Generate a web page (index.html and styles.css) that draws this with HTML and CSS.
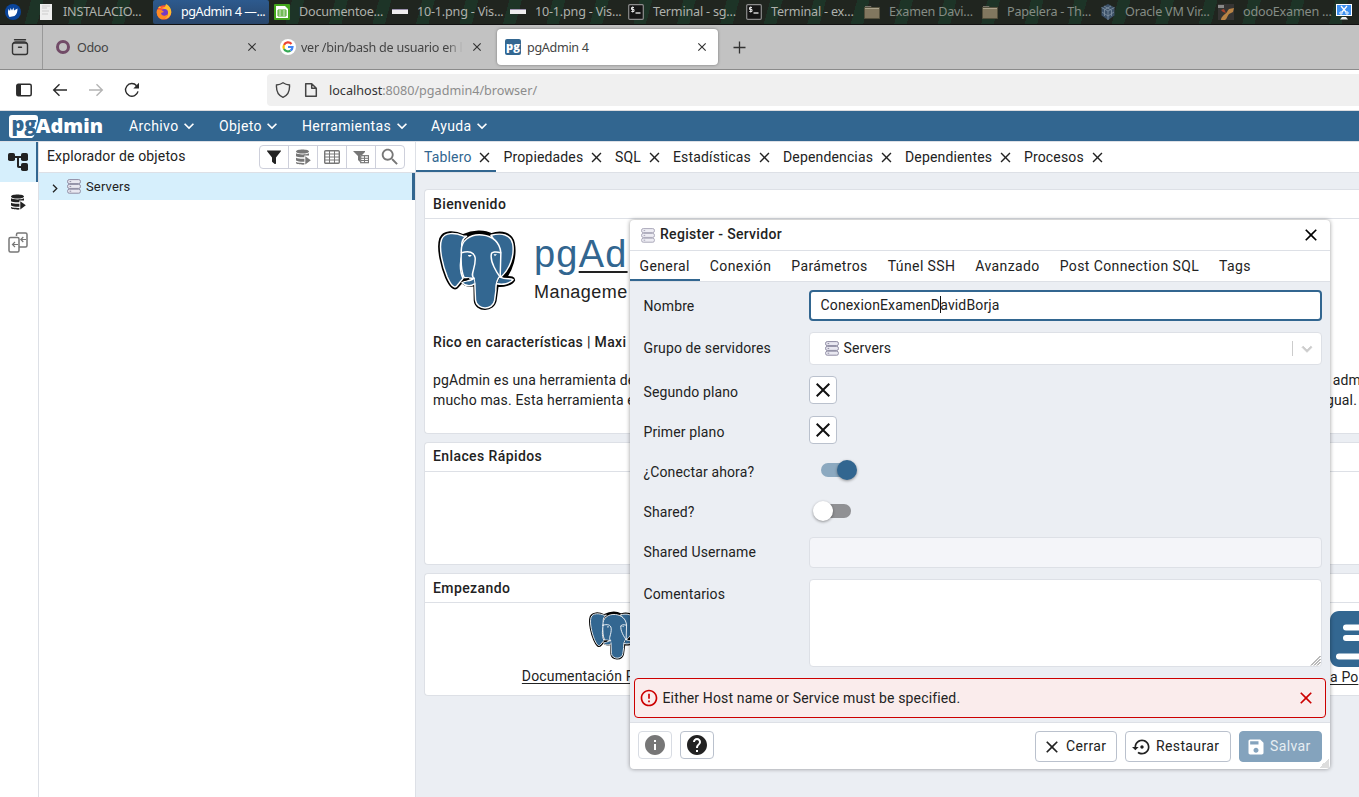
FILE: index.html
```
<!DOCTYPE html>
<html lang="es">
<head>
<meta charset="utf-8">
<title>pgAdmin 4</title>
<link rel="stylesheet" href="styles.css">
</head>
<body>
<svg class="sprite" aria-hidden="true">
  <symbol id="close" viewBox="0 0 24 24"><path d="M19 6.41 17.59 5 12 10.59 6.41 5 5 6.41 10.59 12 5 17.59 6.41 19 12 13.41 17.59 19 19 17.59 13.41 12z"/></symbol>
  <symbol id="chevron" viewBox="0 0 24 24"><path d="M16.59 8.59 12 13.17 7.41 8.59 6 10l6 6 6-6z"/></symbol>
  <symbol id="server" viewBox="0 0 14 15"><g fill="#e9e8f1" stroke="#8f8ca3" stroke-width="1"><rect x=".6" y=".6" width="12.8" height="4" rx="1.6"/><rect x=".6" y="5.4" width="12.8" height="4" rx="1.6"/><rect x=".6" y="10.2" width="12.8" height="4" rx="1.6"/><path d="M2.6 2.6h1.6M2.6 7.4h1.6M2.6 12.2h1.6"/></g></symbol>
  <symbol id="query" viewBox="0 0 16 16"><path d="M1 2.500C1 1.200 4 .4 7.500 .4S14 1.200 14 2.500 11 4.600 7.500 4.600 1 3.800 1 2.500zM1 4.300c2.500 1.500 10 1.600 13 0v2.200l-4.600-.1v1.800C6 8.600 2.500 8 1 7.200zM1 8.700c2 .9 5 1.200 8.400 1v3.100C6 13 2.500 12.400 1 11.500zM1 13c2 .8 5 1 8.400 .9v1.700C5.500 15.800 1 15 1 14zM10.300 7.200l5.500 4-5.500 4.200z"/></symbol>
  <symbol id="folder" viewBox="0 0 16 14"><path d="M1 1h6l1 2H1z" fill="#77736a"/><path d="M.5 2.500h15v11H.5z" fill="#81775f" stroke="#54503d"/><path d="M1 3.500h14" stroke="#aaa28b"/></symbol>
  <symbol id="term" viewBox="0 0 16 16"><rect x=".7" y=".7" width="14.600" height="14.600" rx="1" fill="#151515" stroke="#8c8c8c" stroke-width="1.200"/><path d="M6 3.500H3.500v2H6v2H3.300M4.700 2.500v6" stroke="#e4e4e4" fill="none"/><path d="M7.500 9h5" stroke="#fff" stroke-width="1.200"/></symbol>
  <symbol id="elephant" viewBox="22 22 240 249">
    <g stroke-linejoin="round" stroke-linecap="round">
      <path fill="#000" stroke="#000" stroke-width="9" d="M101 42C76 30 42 28 33 52C23 82 39 140 51 169C63 196 75 208 84 197L99 180C103 191 120 196 137 191L138 239C141 272 194 272 199 238L205 193C226 195 251 188 255 177C254 168 244 170 230 169C247 145 262 106 254 65C249 36 217 28 187 39C166 27 132 28 101 42z"/>
      <path fill="#336791" stroke="#fff" stroke-width="4.500" d="M101 43C77 33 45 31 36 53C26 81 41 138 53 167C64 192 74 204 82 195L101 172C90 150 90 110 104 91C91 72 98 51 112 44z"/>
      <path fill="#336791" stroke="#fff" stroke-width="4.500" d="M186 41C218 33 246 38 252 67C258 103 243 145 216 168L191 120L205 70z"/>
      <path fill="#336791" stroke="#fff" stroke-width="4.500" d="M96 94C92 57 124 36 160 40C192 43 213 63 216 94L214 164C204 176 200 188 201 208L197 239C192 270 143 269 139 238L137 189L134 172L104 169C96 150 94 125 96 94z"/>
      <path fill="#336791" stroke="#fff" stroke-width="4.500" d="M134 172C125 181 105 178 98 185C113 199 127 195 136 189M214 168C231 177 244 170 253 176C243 188 222 192 204 188"/>
      <path fill="none" stroke="#fff" stroke-width="4.500" d="M96 94C119 88 135 91 138 110C140 142 121 162 134 171M187 99C187 91 202 90 215 94M187 99C183 122 204 155 214 168"/>
      <path fill="#000" d="M105 174l16-4-5 7-15 4z"/>
      <path fill="#fff" d="M116 101h12l-5 5c-4 1-6-1-7-5zM194 99h10l-6 6z"/>
    </g>
  </symbol>
</svg>

<header class="taskbar">
  <div class="task launcher"><svg width="16" height="16" viewBox="0 0 16 16"><circle cx="8" cy="8" r="8" fill="#0a459b"/><path d="M3.500 5l1.500 2 .5-3 1.500 2.500L8.500 3.500l.5 3 3.500-2c0 3-.5 6-3 7.500l-5 1c-1.500-2-2-5-1-8z" fill="#fff"/></svg></div>
  <div class="task"><svg width="16" height="18" viewBox="0 0 16 18"><path d="M2 1h12v16H2z" fill="#eee"/><path d="M4 3h8M4 5h5M4 8h7M4 11h6" stroke="#ccc"/></svg><span>INSTALACIO...</span></div>
  <div class="task current"><svg width="16" height="16" viewBox="0 0 16 16"><circle cx="8" cy="8.500" r="7.300" fill="#fb5139"/><path d="M2 4l2-2 1 2 4-1 1-3c4 2 6 6 5 10-1 3-4 5-7 5 4-2 5-6 3-8-2-3-6-3-9-3z" fill="#ffbd2d"/><circle cx="8.500" cy="8.500" r="3.500" fill="#763ac5"/><path d="M1 6c3-1 5 0 7 2l-3 1c0 3 4 4 7 1-1 4-4 5.800-7 5C2 14 0 10 1 6z" fill="#ff8b24"/></svg><span>pgAdmin 4 —...</span></div>
  <div class="task"><svg width="16" height="16" viewBox="0 0 16 16"><rect width="16" height="16" rx="1" fill="#43a51c"/><path d="M2 2h9l3 3v9H2z" fill="#fff"/><path d="M4 6h8v6H4zM4 8h8M4 10h8M8 6v6" fill="none" stroke="#43a51c"/></svg><span>Documentoe...</span></div>
  <div class="task"><svg width="16" height="16"><path d="M0 5h16v5H0z" fill="#eee"/><path d="M0 5.500h16" stroke="#9b91ad"/></svg><span>10-1.png - Vis...</span></div>
  <div class="task"><svg width="16" height="16"><path d="M0 5h16v5H0z" fill="#eee"/><path d="M0 5.500h16" stroke="#9b91ad"/></svg><span>10-1.png - Vis...</span></div>
  <div class="task"><svg width="16" height="16"><use href="#term"/></svg><span>Terminal - sg...</span></div>
  <div class="task"><svg width="16" height="16"><use href="#term"/></svg><span>Terminal - ex...</span></div>
  <div class="task dim"><svg width="16" height="14"><use href="#folder"/></svg><span>Examen Davi...</span></div>
  <div class="task dim"><svg width="16" height="14"><use href="#folder"/></svg><span>Papelera - Th...</span></div>
  <div class="task dim"><svg width="16" height="16" viewBox="0 0 16 16"><path d="M8 0l6.500 3.500v8L8 16l-6.500-4.500v-8z" fill="#3d5269"/><path d="M1.500 3.500L8 7l6.500-3.500M8 7v9M4 2l7 4M11 2L4 6M4.500 6v6M11.500 6v6M2 8l6 4 6-4" stroke="#8193a3" fill="none" stroke-width=".8"/></svg><span>Oracle VM Vir...</span></div>
  <div class="task dim"><svg width="16" height="16" viewBox="0 0 16 16"><rect width="16" height="16" fill="#353433"/><path d="M3 16c0-3 2-4 4-6 2-1 2-3 4-5l5-1-1 4-4 2c-2 2-2 5-4 6z" fill="#b98345"/><path d="M3 6l3-1 2 4-3-1z" fill="#a9412a"/><path d="M0 1h6v3H0z" fill="#888"/></svg><span>odooExamen ...</span></div>
  <div class="task last"><svg width="16" height="16" viewBox="0 0 16 16"><rect x=".5" y=".5" width="15" height="11" fill="#3d91f0" stroke="#fff"/><path d="M5 2l5 6M11 2L6 8" stroke="#fff" stroke-width="1.300"/><circle cx="5" cy="9" r="1.200" fill="none" stroke="#fff"/><circle cx="11" cy="9" r="1.200" fill="none" stroke="#fff"/><path d="M6 13h4l2 2.500H4z" fill="#eee"/></svg></div>
</header>

<nav class="browser-tabs">
  <div class="recent"><svg width="18" height="18" viewBox="0 0 18 18" fill="none" stroke="#333" stroke-width="1.400" stroke-linecap="round"><path d="M3.500 1.700h11"/><rect x="1.500" y="5" width="15" height="11.500" rx="2"/><path d="M2.500 5c.3-1 1-1 2-1h9c1 0 1.700 0 2 1M7.500 9.200h3"/></svg></div>
  <div class="btab odoo"><svg width="16" height="16"><circle cx="8" cy="8" r="5.500" fill="none" stroke="#714b67" stroke-width="3"/></svg><span>Odoo</span><svg class="x"><use href="#close"/></svg></div>
  <div class="btab google"><svg width="16" height="16" viewBox="0 0 16 16"><circle cx="8" cy="8" r="8" fill="#fff"/><g fill="none" stroke-width="2.200"><path d="M11.500 5A4.500 4.500 0 0 0 4 6" stroke="#ea4335"/><path d="M4 6a4.500 4.500 0 0 0 0 4" stroke="#fbbc05"/><path d="M4 10a4.500 4.500 0 0 0 6.500 1.700" stroke="#34a853"/><path d="M10.500 11.700a4.500 4.500 0 0 0 2-3.700H8" stroke="#4285f4"/></g></svg><span class="fade">ver /bin/bash de usuario en lin</span><svg class="x"><use href="#close"/></svg></div>
  <div class="btab selected"><svg width="16" height="16" viewBox="0 0 16 16"><rect width="16" height="16" rx="2" fill="#336791"/><text class="favicon-text" x="1" y="11" textLength="14" lengthAdjust="spacingAndGlyphs">pg</text></svg><span>pgAdmin 4</span><svg class="x"><use href="#close"/></svg></div>
  <svg class="plus" width="13" height="13" viewBox="0 0 13 13"><path d="M6.500 .5v12M.5 6.500h12" stroke="#333" stroke-width="1.300"/></svg>
</nav>

<div class="address-bar">
  <svg width="16" height="16" viewBox="0 0 16 16"><rect x=".8" y="2.300" width="14.400" height="11.400" rx="1.500" fill="none" stroke="#2b2b2b" stroke-width="1.500"/><path d="M1 3h4v10H1z" fill="#2b2b2b"/></svg>
  <svg width="16" height="16" viewBox="0 0 16 16" fill="none" stroke="#2b2b2b" stroke-width="1.400"><path d="M15 8H2M7.500 2.200L1.700 8l5.800 5.800"/></svg>
  <svg width="16" height="16" viewBox="0 0 16 16" fill="none" stroke="#b4b4b4" stroke-width="1.400"><path d="M1 8h13M8.500 2.200L14.300 8l-5.800 5.800"/></svg>
  <svg width="16" height="16" viewBox="0 0 16 16"><path d="M14 9.300A6.300 6.300 0 1 1 12.600 3.700" fill="none" stroke="#2b2b2b" stroke-width="1.400"/><path d="M15 .8v5.700H9.300z" fill="#2b2b2b"/></svg>
  <div class="url">
    <svg width="16" height="16" viewBox="0 0 16 16"><path d="M8 .8c2 1.400 4.200 2 6.500 2.200 .4 6-1.500 10.400-6.500 12.300C3 13.400 1.100 9 1.500 3 3.800 2.800 6 2.200 8 .8z" fill="none" stroke="#444" stroke-width="1.400"/></svg>
    <svg width="14" height="16" viewBox="0 0 14 16"><path d="M1.700 1.700h6l4.600 4.600v8H1.700zM7.700 1.700v4.600h4.600" fill="none" stroke="#444" stroke-width="1.500" stroke-linejoin="round"/></svg>
    <span class="address"><b>localhost</b>:8080/pgadmin4/browser/</span>
  </div>
</div>

<div class="menubar">
  <svg class="brand" width="96" height="26" viewBox="0 0 96 26"><path d="M4 2h23c2 0 3 1 3 3v3l-4 15-2 2H4c-2 0-3-1-3-3V5c0-2 1-3 3-3z" fill="#fff"/><text class="brand-pg" x="3.500" y="18" textLength="25" lengthAdjust="spacingAndGlyphs">pg</text><text class="brand-admin" x="28" y="20" textLength="67" lengthAdjust="spacingAndGlyphs">Admin</text></svg>
  <div class="menu archivo">Archivo<svg><use href="#chevron"/></svg></div>
  <div class="menu objeto">Objeto<svg><use href="#chevron"/></svg></div>
  <div class="menu herr">Herramientas<svg><use href="#chevron"/></svg></div>
  <div class="menu">Ayuda<svg><use href="#chevron"/></svg></div>
</div>

<main class="workspace">
  <aside class="rail">
    <div class="rail-item on"><svg width="20" height="18" viewBox="0 0 20 18" fill="#222"><rect y="0" width="7" height="8" rx="1.800"/><rect x="13" width="7" height="8" rx="1.800"/><rect x="13" y="10" width="7" height="8" rx="1.800"/><path d="M6 3h8v2h-3v7c0 1 0 1 1 1h2v2h-3c-1.500 0-2-.8-2-2V5H6z"/></svg></div>
    <div class="rail-item"><svg width="16" height="16" fill="#222"><use href="#query"/></svg></div>
    <div class="rail-item"><svg width="20" height="21" viewBox="0 0 20 21" fill="none" stroke="#777" stroke-width="1.500"><path d="M8.500 4V2.500c0-1 .5-1.500 1.500-1.500h7.500c1 0 1.500 .5 1.500 1.500v11c0 1-.5 1.500-1.500 1.500H11"/><rect x="1" y="5.500" width="10" height="14.500" rx="1.500"/><path d="M10 12.500H4.500M7 10l-2.500 2.500L7 15M18 7.500h-5M15.300 5l-2.500 2.500 2.500 2.500" stroke-width="1.200"/></svg></div>
  </aside>
  <section class="explorer">
    <div class="explorer-head"><span>Explorador de objetos</span>
      <div class="tools">
        <div class="tool lit"><svg width="14" height="14" viewBox="0 0 14 14"><path d="M.3 .5h13.400c.4 0 .4 .5 .2 .8L9 7.500v5.700c0 .8-.8 1-1.300 .7L5.300 12c-.3-.2-.3-.4-.3-.8V7.500L.1 1.300C-.1 1 0 .5 .3 .5z" fill="#222"/></svg></div>
        <div class="tool"><svg width="16" height="16" fill="#777"><use href="#query"/></svg></div>
        <div class="tool"><svg width="16" height="14" viewBox="0 0 16 14" fill="none" stroke="#777"><rect x=".7" y=".7" width="14.600" height="12.600" rx="1" stroke-width="1.400"/><path d="M.7 4h14.600M.7 7h14.600M.7 10h14.600M5.500 1v12M10.500 1v12"/></svg></div>
        <div class="tool"><svg width="16" height="14" viewBox="0 0 16 14"><path d="M0 1h12v1L9 5H7v7L5 10V6z" fill="#777"/><rect x="7.700" y="5.700" width="7.800" height="7" fill="#fff" stroke="#777" stroke-width="1.200"/><path d="M8 8.300h7.500M8 10.500h7.500M11.500 6v7" stroke="#777"/></svg></div>
        <div class="tool"><svg width="22" height="22" viewBox="0 0 24 24" fill="#777"><path d="M15.500 14h-.79l-.28-.27C15.410 12.590 16 11.110 16 9.500 16 5.910 13.090 3 9.500 3S3 5.910 3 9.500 5.910 16 9.500 16c1.610 0 3.090-.59 4.230-1.570l.27.28v.79l5 4.990L20.490 19l-4.990-5zm-6 0C7.010 14 5 11.990 5 9.500S7.010 5 9.500 5 14 7.010 14 9.500 11.990 14 9.500 14z"/></svg></div>
      </div>
    </div>
    <div class="tree-row"><svg width="6" height="9" viewBox="0 0 6 9"><path d="M1 .7l3.800 3.800L1 8.300" fill="none" stroke="#222" stroke-width="1.300"/></svg><svg class="tree-icon" width="14" height="15"><use href="#server"/></svg><span>Servers</span></div>
  </section>
  <section class="content">
    <div class="panel-tabs">
      <div class="ptab active">Tablero<svg><use href="#close"/></svg></div>
      <div class="ptab">Propiedades<svg><use href="#close"/></svg></div>
      <div class="ptab">SQL<svg><use href="#close"/></svg></div>
      <div class="ptab">Estadísticas<svg><use href="#close"/></svg></div>
      <div class="ptab">Dependencias<svg><use href="#close"/></svg></div>
      <div class="ptab">Dependientes<svg><use href="#close"/></svg></div>
      <div class="ptab">Procesos<svg><use href="#close"/></svg></div>
    </div>
    <div class="dashboard">
      <article class="card welcome">
        <h2>Bienvenido</h2>
        <div class="hero"><svg width="79" height="82"><use href="#elephant"/></svg>
          <div class="wordmark"><div class="name">pg<u>Ad</u></div><div class="sub">Manageme</div></div></div>
        <h3>Rico en características | Maxi</h3>
        <p><span>pgAdmin es una herramienta de</span><span class="tail first">adm</span></p>
        <p class="second"><span>mucho mas. Esta herramienta e</span><span class="tail">gual.</span></p>
      </article>
      <article class="card links"><h2>Enlaces Rápidos</h2></article>
      <article class="card start"><h2>Empezando</h2>
        <div class="resources">
          <div class="resource"><svg width="48" height="49"><use href="#elephant"/></svg><a>Documentación PostgreSQL</a></div>
          <div class="resource right"><svg width="50" height="56" viewBox="0 0 50 56"><path d="M9 0h41v56H9C4 56 0 52 0 47V9C0 4 4 0 9 0z" fill="#336791"/><path d="M16 16.500h34M16 27h34M9 45.500h41" stroke="#fff" stroke-width="6" stroke-linecap="round"/></svg><a>a Po</a></div>
        </div>
      </article>
    </div>
  </section>
</main>

<div class="dialog">
  <div class="dialog-head"><svg width="14" height="15"><use href="#server"/></svg><span>Register - Servidor</span><svg class="dx"><use href="#close"/></svg></div>
  <div class="dialog-tabs"><span class="active">General</span><span>Conexión</span><span>Parámetros</span><span>Túnel SSH</span><span>Avanzado</span><span>Post Connection SQL</span><span>Tags</span></div>
  <div class="form">
    <div class="row r42"><label>Nombre</label><div class="input focus">ConexionExamenD<i class="caret"></i>avidBorja</div></div>
    <div class="row r44"><label>Grupo de servidores</label><div class="input select"><svg width="14" height="15"><use href="#server"/></svg><span>Servers</span><i class="divider"></i><svg class="sel-arrow"><use href="#chevron"/></svg></div></div>
    <div class="row r40"><label>Segundo plano</label><div class="color-btn"><svg><use href="#close"/></svg></div></div>
    <div class="row r40"><label>Primer plano</label><div class="color-btn"><svg><use href="#close"/></svg></div></div>
    <div class="row r40"><label>¿Conectar ahora?</label><div class="switch on"><i></i></div></div>
    <div class="row r41"><label>Shared?</label><div class="switch off"><i></i></div></div>
    <div class="row r42 tight"><label>Shared Username</label><div class="input disabled"></div></div>
    <div class="row r88 tight"><label>Comentarios</label><div class="area"><svg width="11" height="11" viewBox="0 0 11 11"><path d="M1 10.500L10.500 1M4 10.500L10.500 4M7 10.500L10.500 7" stroke="#777"/></svg></div></div>
    <div class="error"><svg width="20" height="20" viewBox="0 0 24 24"><path d="M11 15h2v2h-2zm0-8h2v6h-2zm.99-5C6.470 2 2 6.480 2 12s4.470 10 9.990 10C17.520 22 22 17.520 22 12S17.520 2 11.990 2zM12 20c-4.420 0-8-3.580-8-8s3.580-8 8-8 8 3.580 8 8-3.580 8-8 8z"/></svg><span>Either Host name or Service must be specified.</span><svg class="ex"><use href="#close"/></svg></div>
  </div>
  <div class="dialog-foot">
    <div class="sq muted"><svg width="24" height="24" viewBox="0 0 24 24"><path d="M12 2C6.480 2 2 6.480 2 12s4.480 10 10 10 10-4.480 10-10S17.520 2 12 2zm1 15h-2v-6h2v6zm0-8h-2V7h2v2z"/></svg></div>
    <div class="sq"><svg width="24" height="24" viewBox="0 0 24 24"><path d="M12 2C6.480 2 2 6.480 2 12s4.480 10 10 10 10-4.480 10-10S17.520 2 12 2zm1 17h-2v-2h2v2zm2.070-7.750l-.9.920C13.450 12.900 13 13.500 13 15h-2v-.5c0-1.100.45-2.100 1.170-2.830l1.240-1.260c.37-.36.59-.86.59-1.410 0-1.100-.9-2-2-2s-2 .9-2 2H8c0-2.210 1.790-4 4-4s4 1.790 4 4c0 .88-.36 1.680-.93 2.250z"/></svg></div>
    <div class="btn cerrar"><svg width="20" height="20"><use href="#close"/></svg><span>Cerrar</span></div>
    <div class="btn restaurar"><svg width="20" height="20" viewBox="0 0 24 24"><path d="M14 12c0-1.100-.9-2-2-2s-2 .9-2 2 .9 2 2 2 2-.9 2-2zm-2-9c-4.970 0-9 4.030-9 9H0l4 4 4-4H5c0-3.870 3.130-7 7-7s7 3.130 7 7-3.130 7-7 7c-1.510 0-2.910-.49-4.060-1.300l-1.420 1.440C8.040 20.300 9.940 21 12 21c4.970 0 9-4.030 9-9s-4.030-9-9-9z"/></svg><span>Restaurar</span></div>
    <div class="btn salvar"><svg width="20" height="20" viewBox="0 0 24 24"><path d="M17 3H5c-1.110 0-2 .9-2 2v14c0 1.100.89 2 2 2h14c1.100 0 2-.9 2-2V7l-4-4zm-5 16c-1.660 0-3-1.340-3-3s1.340-3 3-3 3 1.340 3 3-1.340 3-3 3zm3-10H5V5h10v4z"/></svg><span>Salvar</span></div>
    <i class="grip"></i>
  </div>
</div>
</body>
</html>
```
FILE: styles.css
```
* { box-sizing: border-box; }
body { margin: 0; width: 1359px; height: 797px; overflow: hidden; position: relative; display: flex; flex-direction: column; background: #ebeef3; color: #222; font: 14px/20px Roboto, sans-serif; letter-spacing: .15px; }
svg { flex: none; display: block; }
.sprite { position: absolute; width: 0; height: 0; }

/* desktop task bar */
.taskbar { height: 25px; flex: none; display: flex; border-bottom: 1px solid #111; background: repeating-linear-gradient(105deg, #20251f 0 30px, #1d3427 30px 42px); font: 12.600px/24px "Noto Sans", sans-serif; letter-spacing: -.2px; color: #aeb1ac; overflow: hidden; }
.task { width: 118px; flex: none; display: flex; align-items: center; padding-left: 3px; gap: 9px; white-space: nowrap; }
.task.launcher { width: 35px; padding-left: 5px; }
.task.current { background: linear-gradient(#2d5a8e, #29466b); color: #fff; width: 116px; margin-right: 2px; border-radius: 2px; letter-spacing: -.45px; }
.task.dim { color: #858c85; }
.task.last { width: 23px; padding-left: 3px; }

/* browser chrome */
.browser-tabs { height: 45px; flex: none; background: #c2c2c2; border-bottom: 1px solid #8b8b8b; display: flex; align-items: center; font-family: "Noto Sans", sans-serif; font-size: 12.600px; letter-spacing: -.4px; color: #444; }
.browser-tabs span { padding-top: 1px; }
.recent { width: 43px; height: 44px; border-right: 1px solid #999; display: flex; align-items: center; padding-left: 11px; }
.btab { display: flex; align-items: center; height: 36px; white-space: nowrap; gap: 6px; }
.btab .x { width: 14px; height: 14px; margin-left: auto; fill: #333; }
.odoo { width: 224px; padding: 0 8px 0 12px; }
.google { width: 230px; padding: 0 13px 0 13px; gap: 5px; letter-spacing: -.28px; }
.google .x { margin-left: 2px; }
.fade { width: 168px; overflow: hidden; -webkit-mask-image: linear-gradient(90deg, #000 90%, transparent); mask-image: linear-gradient(90deg, #000 90%, transparent); }
.selected { width: 221px; padding: 0 9px 0 8px; background: #fff; border-radius: 4px; box-shadow: 0 0 3px #777; letter-spacing: -.33px; }
.favicon-text { font: 800 11px "Open Sans", sans-serif; fill: #fff; letter-spacing: 0; }
.plus { margin-left: 15px; }
.address-bar { height: 41px; flex: none; background: #fff; border-bottom: 1px solid #dcdcdf; display: flex; align-items: center; padding-left: 16px; gap: 20px; }
.url { margin-left: 107px; flex: 1; height: 32px; display: flex; align-items: center; background: #f0f0f0; border-radius: 4px 0 0 4px; padding-left: 8px; gap: 13px; }
.address { font: 12.600px "Noto Sans", sans-serif; letter-spacing: 0; color: #8c8c8c; margin-left: -2px; }
.address b { font-weight: 400; color: #333; }

/* pgAdmin menu */
.menubar { height: 31px; flex: none; background: #326690; border-bottom: 1px solid #dde0e6; display: flex; align-items: center; color: #fff; padding-left: 8px; }
.brand-pg { font: 800 19px "Open Sans", sans-serif; fill: #326690; letter-spacing: 0; }
.brand-admin { font: 800 19px "Open Sans", sans-serif; fill: #fff; letter-spacing: 0; }
.menu { display: flex; align-items: center; font-size: 14px; letter-spacing: .38px; white-space: nowrap; }
.menu svg { width: 20px; height: 20px; fill: #fff; margin-left: .5px; }
.archivo { margin-left: 25px; width: 90px; }
.objeto { width: 83px; }
.herr { width: 129px; }

.workspace { flex: 1; min-height: 0; display: flex; }
.rail { width: 39px; flex: none; background: #fff; border-right: 1px solid #dde0e6; }
.rail-item { height: 40px; display: flex; align-items: center; justify-content: center; border-right: 2px solid transparent; }
.rail-item.on { background: #d6effc; border-right-color: #326690; }
.explorer { width: 377px; flex: none; background: #fff; border-right: 1px solid #dde0e6; }
.explorer-head { height: 31px; border-bottom: 1px solid #dde0e6; display: flex; align-items: center; padding: 0 10px 0 8px; justify-content: space-between; }
.explorer-head > span { padding-bottom: 2px; }
.tools { display: flex; border: 1px solid #ced0db; border-radius: 4px; height: 24px; width: 146px; }
.tool { flex: 1; display: flex; align-items: center; justify-content: center; border-left: 1px solid #ced0db; }
.tool.lit { border-left: 0; }
.tree-row { height: 27px; background: #d6effc; border-right: 3px solid #326690; display: flex; align-items: center; padding-left: 13px; font-size: 13px; }
.tree-row > svg:first-child { margin-top: 3px; }
.tree-icon { margin: 0 5px 0 9px; }

.content { flex: 1; min-width: 0; display: flex; flex-direction: column; }
.panel-tabs { height: 31px; flex: none; background: #fff; border-bottom: 1px solid #dde0e6; display: grid; grid-template-columns: 79.500px 111.500px 58px 110px 122px 119px 92px; }
.ptab { display: flex; align-items: center; justify-content: space-between; padding: 0 2.500px 0 8px; }
.ptab svg { width: 17px; height: 17px; fill: #222; }
.ptab.active { color: #326690; border-bottom: 2px solid #326690; padding-top: 2px; width: 80px; padding-right: 3px; }
.dashboard { padding: 16px 0 0 8px; display: flex; flex-direction: column; gap: 8px; overflow: hidden; }
.card { background: #fff; border: 1px solid #dde0e6; border-radius: 4px 0 0 4px; border-right: 0; overflow: hidden; }
.card h2 { margin: 0; height: 29px; padding: 0 8px; line-height: 28px; font-size: 14px; font-weight: 500; letter-spacing: .4px; border-bottom: 1px solid #dde0e6; }
.welcome { height: 245px; }
.links { height: 123px; }
.card.links h2 { line-height: 26px; }
.start { height: 123px; }
.hero { display: flex; padding: 10px 0 0 12px; height: 113px; }
.wordmark { margin: 1px 0 0 18px; font-family: "Liberation Sans", sans-serif; letter-spacing: 0; }
.name { font-size: 38px; line-height: 48px; color: #326690; letter-spacing: 1.200px; }
.name u { text-decoration-color: #222; text-decoration-thickness: 2px; text-underline-offset: 4px; }
.sub { font-size: 18px; line-height: 28px; letter-spacing: .45px; }
.welcome h3 { margin: 0 0 18px 8px; font-size: 14px; line-height: 20px; font-weight: 500; letter-spacing: .33px; white-space: nowrap; }
.welcome p { margin: 0; padding: 0 0 0 8px; display: flex; justify-content: space-between; }
.welcome .second { padding-right: 2px; }
.tail { white-space: nowrap; }
.tail.first { margin-right: -2px; }
.resources { display: flex; justify-content: space-between; padding: 8px 0 0 99px; }
.resource { width: 175px; display: flex; flex-direction: column; align-items: center; white-space: nowrap; }
.resource a { text-decoration: underline; text-underline-offset: 2px; margin-top: 6px; }
.resource.right { width: 29px; align-items: flex-start; }
.resource.right a { margin: 0; }

/* server registration dialog */
.dialog { position: absolute; left: 630px; top: 220px; width: 700px; height: 549px; background: #fff; border-radius: 4px; box-shadow: 0 0 4px rgba(0,0,0,.4); display: flex; flex-direction: column; }
.dialog-head { height: 31px; flex: none; border-bottom: 1px solid #dde0e6; display: flex; align-items: center; padding: 0 10px 2px 11px; gap: 5px; font-weight: 500; letter-spacing: .3px; }
.dialog-head svg:first-child { opacity: .75; margin-top: 2px; }
.dialog-head .dx { margin: 1px -1px 0 auto; width: 20px; height: 20px; }
.dialog-tabs { height: 31px; flex: none; border-bottom: 1px solid #dde0e6; display: flex; letter-spacing: .39px; }
.dialog-tabs span { padding: 0 10px; line-height: 31px; white-space: nowrap; }
.dialog-tabs .active { border-bottom: 2px solid #326690; padding-left: 9.500px; }
.form { flex: 1; background: #ebeef3; border-bottom: 1px solid #dde0e6; padding: 8px 4px 0 13.500px; }
.row { display: flex; padding-right: 4px; }
.row label { width: 165.500px; line-height: 32px; letter-spacing: .13px; }
.row.tight label { line-height: 30px; }
.r42 { height: 42px; } .r44 { height: 44px; } .r40 { height: 40px; } .r41 { height: 41px; } .r88 { height: 88px; }
.input { width: 513px; height: 31px; background: #fff; border: 1px solid #dde0e6; border-radius: 4px; display: flex; align-items: center; }
.focus { border: 2px solid #326690; padding: 0 0 2px 9.500px; }
.caret { width: 1px; height: 17px; background: #111; margin: 0 -1px 0 0; }
.select { height: 33px; padding-left: 15px; gap: 4.500px; }
.select span { padding-bottom: 2px; }
.divider { width: 1px; height: 15px; background: #ccc; margin-left: auto; }
.sel-arrow { width: 20px; height: 20px; fill: #ccc; stroke: #ccc; stroke-width: 1px; margin-right: 4px; }
.color-btn { width: 28px; height: 28px; background: #fff; border: 1px solid #bac1cd; border-radius: 4px; display: flex; align-items: center; justify-content: center; }
.color-btn svg { width: 24px; height: 24px; fill: #111; }
.switch { width: 34px; height: 14px; border-radius: 7px; display: flex; align-items: center; }
.switch i { width: 20px; height: 20px; flex: none; border-radius: 50%; box-shadow: 0 1px 3px rgba(0,0,0,.4); }
.switch.on { margin: 7px 0 0 12px; background: #8ca9c0; justify-content: flex-end; }
.switch.on i { background: #326690; margin-right: -2px; }
.switch.off { margin: 8px 0 0 8px; background: #909194; }
.switch.off i { background: #fff; margin-left: -4px; }
.disabled { background: #f4f5f9; }
.area { width: 513px; height: 88px; background: #fff; border: 1px solid #dde0e6; border-radius: 4px; display: flex; align-items: flex-end; justify-content: flex-end; }
.error { width: 692px; height: 40px; margin: 11px 0 0 -9.500px; border: 1px solid #cc0000; border-radius: 4px; background: #faecec; display: flex; align-items: center; padding: 0 9.500px 0 4px; gap: 3.500px; letter-spacing: .15px; fill: #c00; }
.ex { width: 20px; height: 20px; margin-left: auto; }
.dialog-foot { height: 46px; flex: none; display: flex; align-items: flex-start; padding: 8px 8px 0; position: relative; }
.sq { width: 34px; height: 28px; border: 1px solid #bac1cd; border-radius: 4px; display: flex; align-items: center; justify-content: center; margin-right: 8px; fill: #222; }
.sq.muted { border-color: #d8dce3; fill: #777; }
.btn { height: 31px; border: 1px solid #bac1cd; border-radius: 4px; display: flex; align-items: center; padding-left: 6px; gap: 4px; margin-left: 8px; letter-spacing: .37px; fill: #222; }
.btn span { padding-bottom: 2px; }
.cerrar { width: 82px; margin-left: auto; }
.restaurar { width: 106px; }
.salvar { width: 83px; background: #84a3bd; border-color: #84a3bd; color: #e6edf2; fill: #fff; }
.grip { position: absolute; right: 1px; bottom: 1px; width: 10px; height: 10px; background: linear-gradient(135deg, transparent 50%, #ddd 50%); }
```
